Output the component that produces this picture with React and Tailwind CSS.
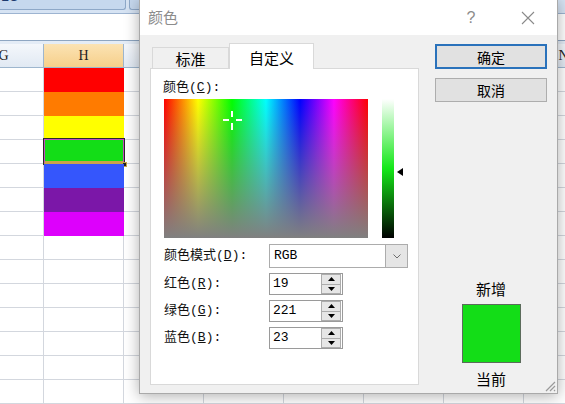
import React from "react";

const fills = ["#ff0000", "#ff7b00", "#ffff00", "#13dd17", "#3556fc", "#7b17a8", "#dd00fc"];
const cols = [
  { l: "G", w: "w-[80px]", show: true },
  { l: "H", w: "w-[80px]", show: true },
  { l: "I", w: "w-[80px]", show: false },
  { l: "J", w: "w-[80px]", show: false },
  { l: "K", w: "w-[80px]", show: false },
  { l: "L", w: "w-[80px]", show: false },
  { l: "M", w: "w-[80px]", show: false },
  { l: "N", w: "w-[80px]", show: true },
];
const rowIdx = Array.from({ length: 14 }, (_, i) => i);

function Sheet() {
  return (
    <div className="flex flex-col">
      <div className="h-[14px] bg-[#d6e3f3] border-b border-[#9db4d1] flex">
        <div className="w-[126px] h-[10px] bg-[#c6d8ee] border-r border-b border-[#8ea8c8] rounded-br-[3px] overflow-hidden">
          <div className="-mt-[11px] pl-[1px] text-[14px] leading-[14px] text-[#1e3a6e] font-['Liberation_Sans',sans-serif]">LC</div>
        </div>
        <div className="ml-[3px] w-[80px] h-[10px] bg-[#c6d8ee] border-l border-b border-[#8ea8c8] rounded-bl-[3px]" />
      </div>
      <div className="h-[27px] bg-white border-b border-[#8ea6c2]" />
      <div className="h-[3px] bg-[#e4ecf6]" />
      <div className="-ml-[36px] flex flex-col w-[640px]">
        <div className="flex h-[24px]">
          {cols.map((c) => (
            <div
              key={c.l}
              className={`${c.w} shrink-0 h-full border-r border-b border-[#9eb6ce] flex items-center justify-center text-[14px] text-[#222] font-['Liberation_Serif',serif] ${
                c.l === "H" ? "bg-[linear-gradient(#fbe3b4,#f6cf8a)]" : "bg-[linear-gradient(#f4f7fb,#e1e9f3)]"
              }`}
            >
              {c.show ? c.l : null}
            </div>
          ))}
        </div>
        {rowIdx.map((r) => (
          <div key={r} className="flex h-[24px]">
            {cols.map((c) => {
              const isH = c.l === "H" && r < fills.length;
              if (isH) {
                return (
                  <div
                    key={c.l}
                    className={`${c.w} shrink-0 h-full relative`}
                    style={{ background: fills[r] }}
                  >
                    {r === 3 && (
                      <div className="absolute left-[-1px] top-[-2px] right-[-1px] bottom-[-1px] border border-[#2a2a2a]">
                        <div className="w-full h-full border border-[#c24fc0] border-b-[3px] border-b-[#c9a24a]" />
                        <div className="absolute right-[-3px] bottom-[-3px] w-[5px] h-[5px] bg-[#222] border border-[#c9a24a]" />
                      </div>
                    )}
                  </div>
                );
              }
              return <div key={c.l} className={`${c.w} shrink-0 h-full border-r border-b border-[#d3d7de]`} />;
            })}
          </div>
        ))}
      </div>
    </div>
  );
}

function Spin() {
  return (
    <div className="ml-auto mr-px w-[20px] h-[20px] flex flex-col border border-[#acacac] bg-[#e6e6e6]">
      <div className="flex-1 flex items-center justify-center border-b border-[#acacac]">
        <svg width="7" height="4" viewBox="0 0 7 4">
          <path d="M0 4L3.5 0L7 4Z" fill="#000" />
        </svg>
      </div>
      <div className="flex-1 flex items-center justify-center">
        <svg width="7" height="4" viewBox="0 0 7 4">
          <path d="M0 0L3.5 4L7 0Z" fill="#000" />
        </svg>
      </div>
    </div>
  );
}

function Label({ cn, k }) {
  return (
    <div className="w-[105px] shrink-0 text-[13px] leading-[16px] text-[#111] font-['Liberation_Mono','Noto_Sans_CJK_SC',monospace] whitespace-nowrap">
      {cn}(<span className="underline">{k}</span>):
    </div>
  );
}

function NumRow({ cn, k, v }) {
  return (
    <div className="flex items-center mt-[5px]">
      <Label cn={cn} k={k} />
      <div className="w-[74px] h-[22px] border border-[#9a9a9a] bg-white flex items-center">
        <span className="pl-[3px] text-[13px] text-black font-['Liberation_Mono',monospace]">{v}</span>
        <Spin />
      </div>
    </div>
  );
}

function Dialog() {
  return (
    <div className="absolute left-[139px] top-[-1px] w-[419px] h-[395px] border border-[#a9a9a9] bg-[#f0f0f0] shadow-[0_2px_14px_rgba(0,0,0,0.32)] flex flex-col font-['Noto_Sans_CJK_SC',sans-serif] text-black">
      <div className="h-[35px] shrink-0 bg-white flex items-center">
        <span className="pl-[8px] text-[15px] text-[#8c8c8c]">颜色</span>
        <div className="flex-1" />
        <span className="w-[30px] text-center text-[16px] text-[#8c8c8c] font-['Liberation_Sans',sans-serif]">?</span>
        <div className="w-[27px]" />
        <div className="w-[30px] flex justify-center">
          <svg width="14" height="14" viewBox="0 0 14 14">
            <path d="M1 1L13 13M13 1L1 13" stroke="#8a8a8a" strokeWidth="1.1" />
          </svg>
        </div>
        <div className="w-[14px]" />
      </div>
      <div className="flex flex-1 pl-[10px] pt-[8px]">
        <div className="flex flex-col">
          <div className="flex items-end h-[25px]">
            <div className="ml-[2px] w-[77px] h-[21px] border border-b-0 border-[#d9d9d9] flex items-center justify-center text-[15px] leading-none">
              标准
            </div>
            <div className="w-[85px] h-[26px] -mb-px relative z-10 bg-white border border-b-0 border-[#d9d9d9] flex items-center justify-center text-[15px] leading-none pt-[2px]">
              自定义
            </div>
          </div>
          <div className="w-[269px] h-[317px] border border-[#d9d9d9] bg-white pl-[13px] pt-[11px] flex flex-col">
            <div className="-ml-px">
              <Label cn="颜色" k="C" />
            </div>
            <div className="flex mt-[3px]">
              <div className="relative w-[204px] h-[139px] bg-[linear-gradient(to_right,#ff0000,#ffff00_16.7%,#00ff00_33.3%,#00ffff_50%,#0000ff_66.7%,#ff00ff_83.3%,#ff0000)]">
                <div className="absolute inset-0 bg-[linear-gradient(to_bottom,rgba(128,128,128,0),#808080)]" />
                <div className="absolute left-[59px] top-[20px] w-[6px] h-[2px] bg-white" />
                <div className="absolute left-[72px] top-[20px] w-[6px] h-[2px] bg-white" />
                <div className="absolute left-[67px] top-[12px] w-[2px] h-[6px] bg-white" />
                <div className="absolute left-[67px] top-[24px] w-[2px] h-[7px] bg-white" />
              </div>
              <div className="ml-[14px] w-[12px] h-[139px] bg-[linear-gradient(to_bottom,#ffffff,#14e818_50%,#000000)]" />
              <div className="relative w-[10px] h-[139px]">
                <svg className="absolute left-[3px] top-[69px]" width="6" height="8" viewBox="0 0 6 8">
                  <path d="M0 4L6 0L6 8Z" fill="#000" />
                </svg>
              </div>
            </div>
            <div className="flex items-center mt-[6px]">
              <Label cn="颜色模式" k="D" />
              <div className="w-[139px] h-[24px] border border-[#acacac] bg-white flex items-center">
                <span className="pl-[4px] text-[13px] font-['Liberation_Mono',monospace]">RGB</span>
                <div className="ml-auto w-[22px] h-full bg-[#e5e5e5] border-l border-[#acacac] flex items-center justify-center">
                  <svg width="8" height="5" viewBox="0 0 8 5">
                    <path d="M0.5 0.5L4 4L7.5 0.5" stroke="#6d6d6d" fill="none" strokeWidth="1" />
                  </svg>
                </div>
              </div>
            </div>
            <NumRow cn="红色" k="R" v="19" />
            <NumRow cn="绿色" k="G" v="221" />
            <NumRow cn="蓝色" k="B" v="23" />
          </div>
        </div>
        <div className="ml-[16px] w-[112px] flex flex-col items-center pb-[5px]">
          <div className="mt-[1px] w-[112px] h-[25px] border-2 border-[#2a72bb] bg-[#e1e1e1] flex items-center justify-center text-[14px] leading-none">
            确定
          </div>
          <div className="mt-[9px] w-[112px] h-[24px] border border-[#adadad] bg-[#e1e1e1] flex items-center justify-center text-[14px] leading-none">
            取消
          </div>
          <div className="mt-auto text-[15px] leading-[18px]">新增</div>
          <div className="mt-[6px] w-[59px] h-[59px] border border-[#5b6b5b] bg-[#13dd17]" />
          <div className="mt-[7px] text-[15px] leading-[18px]">当前</div>
        </div>
      </div>
      <svg className="absolute right-[1px] bottom-[1px]" width="12" height="12" viewBox="0 0 12 12">
        <path d="M11 2L2 11M11 6L6 11M11 10L10 11" stroke="#9a9a9a" strokeWidth="1.2" />
      </svg>
    </div>
  );
}

export default function App() {
  return (
    <div className="relative w-[565px] h-[404px] overflow-hidden bg-white">
      <Sheet />
      <Dialog />
    </div>
  );
}
